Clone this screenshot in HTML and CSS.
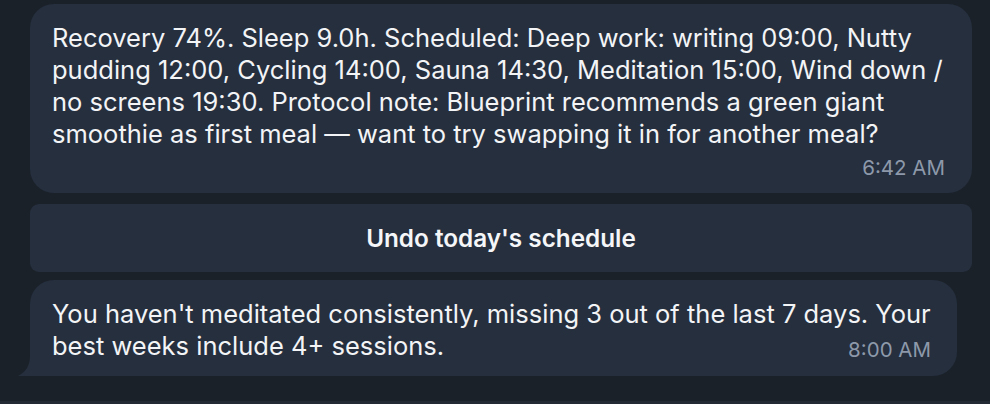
FILE: index.html
```html
<!DOCTYPE html>
<html>
<head>
<meta charset="utf-8">
<link rel="stylesheet" href="styles.css">
</head>
<body>
<div class="chat">
  <div class="bubble">
    <div class="text">Recovery 74%. Sleep 9.0h. Scheduled: Deep work: writing 09:00, Nutty<br>pudding 12:00, Cycling 14:00, Sauna 14:30, Meditation 15:00, Wind down /<br>no screens 19:30. Protocol note: Blueprint recommends a green giant<br>smoothie as first meal — want to try swapping it in for another meal?</div>
    <div class="time time-own">6:42 AM</div>
  </div>
  <div class="button">Undo today's schedule</div>
  <div class="bubble bubble-short bubble-tail">
    <span class="text">You haven't meditated consistently, missing 3 out of the last 7 days. Your<br>best weeks include 4+ sessions.</span><span class="time">8:00 AM</span>
    <svg class="tail" width="16" height="20" viewBox="0 0 16 20"><path d="M14 0 C14 9 10 16 2 20 L16 20 L16 0 Z" fill="#252f3e"/></svg>
  </div>
</div>
<div class="footer-line"></div>
</body>
</html>
```
FILE: styles.css
```css
html, body {
  margin: 0;
  padding: 0;
  background: #1b2129;
  height: 100%;
}
body {
  font-family: "Inter", "Liberation Sans", sans-serif;
  color: #f3f4f6;
  overflow: hidden;
  position: relative;
}
.chat {
  display: flex;
  flex-direction: column;
  align-items: flex-start;
  padding: 4px 18px 0 30px;
}
.bubble {
  position: relative;
  display: flow-root;
  box-sizing: border-box;
  width: 942px;
  background: #252f3e;
  border-radius: 24px;
  padding: 18px 27px 12px 22px;
  font-size: 25.5px;
  line-height: 32px;
  white-space: nowrap;
}
.bubble-short {
  width: 927px;
  margin-top: 8px;
  padding-right: 26px;
  padding-bottom: 13px;
}
.bubble-tail {
  border-bottom-left-radius: 0;
}
.tail {
  position: absolute;
  left: -14px;
  bottom: 0;
}
.time {
  float: right;
  margin-top: 7px;
  font-size: 20.5px;
  line-height: 26px;
  color: #8d99aa;
}
.time-own {
  float: none;
  margin-top: 5px;
  text-align: right;
}
.button {
  box-sizing: border-box;
  width: 942px;
  height: 68px;
  margin-top: 11px;
  background: #252f3e;
  border-radius: 9px;
  display: flex;
  align-items: center;
  justify-content: center;
  font-size: 24.3px;
  font-weight: 600;
  color: #f5f6f8;
}
.footer-line {
  position: absolute;
  left: 0;
  right: 0;
  bottom: 0;
  height: 3px;
  background: #232a33;
}
```
